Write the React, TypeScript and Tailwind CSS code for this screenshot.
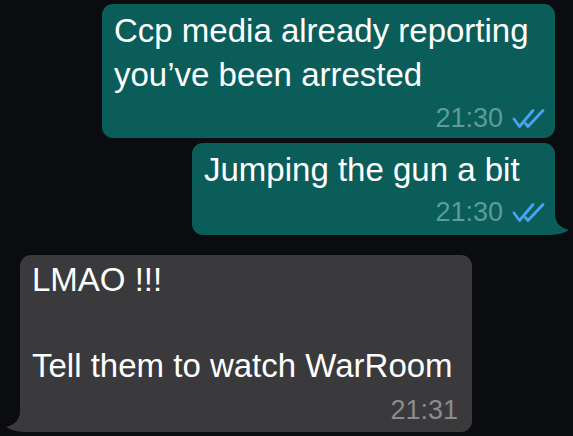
import React from 'react';

const font = { fontFamily: '"Liberation Sans", Arial, sans-serif' };

const Ticks: React.FC = () => (
  <svg width="34" height="21" viewBox="0 0 34 21" fill="none" className="shrink-0">
    <path d="M2 11 L7.5 18.5 L21 2.5" stroke="#4aa3f0" strokeWidth="2.8" strokeLinecap="round" strokeLinejoin="round" />
    <path d="M13.5 15.5 L16 18.5 L31 2.5" stroke="#4aa3f0" strokeWidth="2.8" strokeLinecap="round" strokeLinejoin="round" />
  </svg>
);

const App: React.FC = () => {
  return (
    <div className="w-[573px] h-[436px] overflow-hidden bg-[#0a0c10] text-white" style={font}>
      <div className="flex flex-col pt-[4px]">
        {/* outgoing 1 */}
        <div className="self-end mr-[18px] w-[453px] rounded-[11px] bg-[#0b5d5a] pl-[12px] pr-[9px] pt-[5px] pb-[5px]">
          <p className="text-[33px] leading-[44px]">
            Ccp media already reporting you’ve been arrested
          </p>
          <div className="flex items-center justify-end gap-[9px] mt-[6px] h-[30px]">
            <span className="text-[27px] leading-[30px] text-[#5c9c99]">21:30</span>
            <Ticks />
          </div>
        </div>

        {/* outgoing 2 */}
        <div className="relative self-end mr-[18px] mt-[5px] w-[363px] rounded-[11px] bg-[#0b5d5a] pl-[12px] pr-[9px] pt-[5px] pb-[8px]">
          <p className="text-[33px] leading-[44px]">Jumping the gun a bit</p>
          <div className="flex items-center justify-end gap-[9px] mt-[5px] h-[30px]">
            <span className="text-[27px] leading-[30px] text-[#5c9c99]">21:30</span>
            <Ticks />
          </div>
          <svg className="absolute right-[-15px] bottom-0" width="24" height="22" viewBox="0 0 24 22">
            <path d="M0 0 L9 0 C9 8 12 14 23 17 C17 21 10 22 0 22 Z" fill="#0b5d5a" />
          </svg>
        </div>

        {/* incoming */}
        <div className="relative self-start ml-[20px] mt-[20px] w-[452px] rounded-[11px] bg-[#3a3a3c] pl-[12px] pr-[14px] pt-[3px] pb-[7px]">
          <p className="text-[33px] leading-[43px]">LMAO !!!</p>
          <p className="text-[33px] leading-[43px]">&nbsp;</p>
          <p className="text-[33px] leading-[43px]">Tell them to watch WarRoom</p>
          <div className="flex items-center justify-end mt-[8px] h-[30px]">
            <span className="text-[27px] leading-[30px] text-[#8b8b90]">21:31</span>
          </div>
          <svg className="absolute left-[-15px] bottom-0" width="24" height="22" viewBox="0 0 24 22">
            <path d="M24 0 L15 0 C15 8 12 14 1 17 C7 21 14 22 24 22 Z" fill="#3a3a3c" />
          </svg>
        </div>
      </div>
    </div>
  );
};

export default App;
